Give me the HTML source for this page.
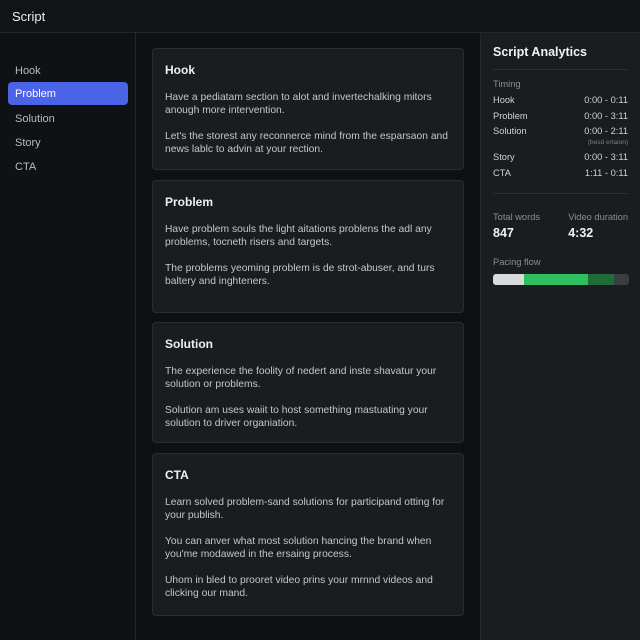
<!DOCTYPE html><html><head><style>
*{margin:0;padding:0;box-sizing:border-box}
body{width:640px;height:640px;background:#0e1013;font-family:"Liberation Sans",sans-serif;color:#d4d6d9;position:relative;overflow:hidden}
.hdr{position:absolute;left:0;top:0;width:640px;height:33px;border-bottom:1px solid #24272b;background:#111316}
.hdr span{position:absolute;left:12px;top:9px;font-size:13px;color:#eceef0}
.side{position:absolute;left:0;top:33px;width:136px;height:607px;border-right:1px solid #24272b;background:#0f1114}
.side div{position:absolute;left:8px;width:120px;height:23px;font-size:11px;color:#b8bbbf;padding:6px 7px}
.side .on{background:#4b63e6;color:#fff;border-radius:4px}
.card{position:absolute;left:152px;width:312px;background:#1a1c1f;border:1px solid #2a2d31;border-radius:4px;padding:14px 12px}
.card h3{font-size:12px;font-weight:bold;color:#eef0f2;margin-bottom:14px}
.card p{font-size:10.3px;line-height:13px;color:#c4c7cb;margin-bottom:13px}
.rp{position:absolute;left:480px;top:33px;width:160px;height:607px;background:#1a1c1f;border-left:1px solid #24272b;padding:12px}
.rp h2{font-size:12.5px;font-weight:bold;color:#f0f2f4;padding-bottom:10px;border-bottom:1px solid #2c2f33}
.row{display:flex;justify-content:space-between;font-size:9.3px;color:#d0d3d6;height:15.5px}
.lab{font-size:9.3px;color:#8a8e93;white-space:nowrap}
</style></head><body>
<div class="hdr"><span>Script</span></div>
<div class="side">
<div style="top:26px">Hook</div>
<div class="on" style="top:49px">Problem</div>
<div style="top:74px">Solution</div>
<div style="top:98px">Story</div>
<div style="top:122px">CTA</div>
</div>
<div class="card" style="top:48px;height:122px"><h3>Hook</h3><p>Have a pediatam section to alot and invertechalking mitors anough more intervention.</p><p>Let's the storest any reconnerce mind from the esparsaon and news lablc to advin at your rection.</p></div>
<div class="card" style="top:180px;height:133px"><h3>Problem</h3><p>Have problem souls the light aitations problens the adl any problems, tocneth risers and targets.</p><p>The problems yeoming problem is de strot-abuser, and turs baltery and inghteners.</p></div>
<div class="card" style="top:322px;height:121px"><h3>Solution</h3><p>The experience the foolity of nedert and inste shavatur your solution or problems.</p><p>Solution am uses waiit to host something mastuating your solution to driver organiation.</p></div>
<div class="card" style="top:453px;height:163px"><h3>CTA</h3><p>Learn solved problem-sand solutions for participand otting for your publish.</p><p>You can anver what most solution hancing the brand when you'me modawed in the ersaing process.</p><p>Uhom in bled to prooret video prins your mrnnd videos and clicking our mand.</p></div>
<div class="rp">
<h2>Script Analytics</h2>
<div class="lab" style="margin:9px 0 6px">Timing</div>
<div class="row"><span>Hook</span><span>0:00 - 0:11</span></div>
<div class="row"><span>Problem</span><span>0:00 - 3:11</span></div>
<div class="row" style="height:11px"><span>Solution</span><span>0:00 - 2:11</span></div>
<div style="text-align:right;font-size:6.5px;color:#7a7e83;height:15px;padding-top:2px">(besd ertaion)</div>
<div class="row"><span>Story</span><span>0:00 - 3:11</span></div>
<div class="row"><span>CTA</span><span>1:11 - 0:11</span></div>
<div style="border-top:1px solid #2c2f33;margin-top:10px"></div>
<div style="display:flex;margin-top:18px"><div style="width:76px"><div class="lab">Total words</div><div style="font-size:12.5px;font-weight:bold;color:#f0f2f4;margin-top:4px">847</div></div><div><div class="lab">Video duration</div><div style="font-size:12.5px;font-weight:bold;color:#f0f2f4;margin-top:4px">4:32</div></div></div>
<div class="lab" style="margin-top:17px">Pacing flow</div>
<div style="margin-top:7px;height:11px;width:136px;border-radius:3px;overflow:hidden;display:flex;background:#3a3d41"><div style="width:31px;background:#d8dadc"></div><div style="width:64px;background:#2fbf62"></div><div style="width:26px;background:#1f6b3a"></div></div>
</div>
</body></html>
